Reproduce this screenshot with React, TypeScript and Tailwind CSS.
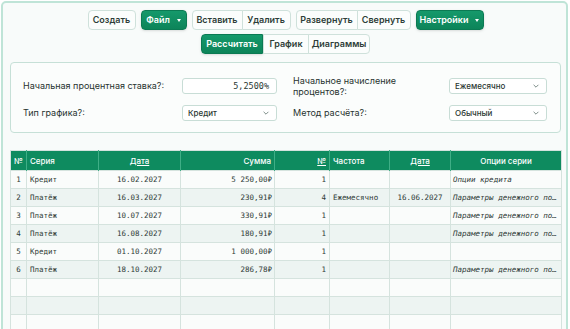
import React from "react";

const mono = "font-['DejaVu_Sans_Mono','Liberation_Mono',monospace]";

type Row = {
	n: number;
	series: string;
	date: string;
	sum: string;
	count: number;
	freq?: string;
	endDate?: string;
	options?: string;
};

const rows: Row[] = [
	{ n: 1, series: "Кредит", date: "16.02.2027", sum: "5 250,00₽", count: 1, options: "Опции кредита" },
	{ n: 2, series: "Платёж", date: "16.03.2027", sum: "230,91₽", count: 4, freq: "Ежемесячно", endDate: "16.06.2027", options: "Параметры денежного по…" },
	{ n: 3, series: "Платёж", date: "10.07.2027", sum: "330,91₽", count: 1, options: "Параметры денежного по…" },
	{ n: 4, series: "Платёж", date: "16.08.2027", sum: "180,91₽", count: 1, options: "Параметры денежного по…" },
	{ n: 5, series: "Кредит", date: "01.10.2027", sum: "1 000,00₽", count: 1 },
	{ n: 6, series: "Платёж", date: "18.10.2027", sum: "286,78₽", count: 1, options: "Параметры денежного по…" },
];

function Btn({ children, green, className = "" }: { children: React.ReactNode; green?: boolean; className?: string }) {
	return (
		<button
			className={
				"flex h-[20px] items-center justify-center px-[7px] text-[9px] font-semibold " +
				(green
					? "rounded-[4px] border border-[#0b7a53] bg-gradient-to-b from-[#15996b] to-[#0c8459] text-white shadow-sm "
					: "border border-[#cfe1db] bg-[#fbfdfc] text-[#2e3d38] ") +
				className
			}
		>
			{children}
		</button>
	);
}

function Caret() {
	return <span className="ml-[7px] inline-block h-0 w-0 border-x-[2.5px] border-t-[3px] border-x-transparent border-t-white" />;
}

function Chevron() {
	return (
		<svg width="8" height="8" viewBox="0 0 10 10" className="text-[#6b7d77]">
			<path d="M2 3.5 L5 6.5 L8 3.5" fill="none" stroke="currentColor" strokeWidth="1.1" />
		</svg>
	);
}

function Select({ value }: { value: string }) {
	return (
		<div className="flex h-[16px] items-center justify-between rounded-[3px] border border-[#c8ddd6] bg-white pl-[5px] pr-[6px] text-[8px] font-medium text-[#2b3833]">
			<span>{value}</span>
			<Chevron />
		</div>
	);
}

export default function App() {
	return (
		<div className="h-[329px] w-[570px] overflow-hidden bg-white pl-[1px] pt-[1px] font-['Inter','Liberation_Sans',sans-serif]">
			<div className="h-[340px] w-[567px] rounded-[5px] border-2 border-[#bfe4d7] bg-[#f8fbfa] pl-[7px] pr-[5px] pt-[7px]">
				{/* toolbar */}
				<div className="flex justify-center gap-[5px]">
					<Btn className="w-[48px] rounded-[4px]">Создать</Btn>
					<Btn green className="w-[46px]">
						Файл <Caret />
					</Btn>
					<div className="flex">
						<Btn className="w-[51px] rounded-l-[4px]">Вставить</Btn>
						<Btn className="-ml-px w-[49px] rounded-r-[4px]">Удалить</Btn>
					</div>
					<div className="flex">
						<Btn className="w-[62px] rounded-l-[4px]">Развернуть</Btn>
						<Btn className="-ml-px w-[54px] rounded-r-[4px]">Свернуть</Btn>
					</div>
					<Btn green className="w-[68px]">
						Настройки <Caret />
					</Btn>
				</div>
				<div className="mt-[4px] flex justify-center">
					<Btn green className="w-[62px] !rounded-r-none !rounded-l-[4px]">Рассчитать</Btn>
					<Btn className="w-[46px]">График</Btn>
					<Btn className="-ml-px w-[62px] rounded-r-[4px]">Диаграммы</Btn>
				</div>

				{/* settings panel */}
				<div className="mt-[8px] w-[551px] rounded-[4px] border border-[#c6e0d7] bg-[#fbfdfc] pb-[11px] pl-[12px] pt-[12px] text-[9px] text-[#27332f]">
					<div className="grid grid-cols-[159px_95px_172px_98px] items-center gap-y-[8px]">
						<span>Начальная процентная ставка?:</span>
						<div className={"flex h-[16px] items-center justify-end rounded-[3px] border border-[#c8ddd6] bg-white pr-[7px] text-[8.5px] text-[#2b3833] " + mono}>
							5,2500%
						</div>
						<span className="pl-[16px] leading-[11px]">
							Начальное начисление
							<br />
							процентов?:
						</span>
						<Select value="Ежемесячно" />
						<span>Тип графика?:</span>
						<Select value="Кредит" />
						<span className="pl-[16px]">Метод расчёта?:</span>
						<Select value="Обычный" />
					</div>
				</div>

				{/* table */}
				<table className="mt-[17px] w-[551px] table-fixed border-collapse border border-[#d3e2dd]">
					<colgroup>
						<col className="w-[16px]" />
						<col className="w-[72px]" />
						<col className="w-[82px]" />
						<col className="w-[94px]" />
						<col className="w-[55px]" />
						<col className="w-[60px]" />
						<col className="w-[61px]" />
						<col className="w-[111px]" />
					</colgroup>
					<thead>
						<tr className="h-[20px] bg-[#0e8b5f] text-[8px] font-medium text-white">
							<th className="border-r border-[#3fae86] pl-[3px] text-left font-medium">№</th>
							<th className="border-r border-[#3fae86] pl-[3px] text-left font-medium">Серия</th>
							<th className="border-r border-[#3fae86] text-center font-medium underline">Дата</th>
							<th className="border-r border-[#3fae86] pr-[3px] text-right font-medium">Сумма</th>
							<th className="border-r border-[#3fae86] pr-[3px] text-right font-medium underline">№</th>
							<th className="border-r border-[#3fae86] pl-[3px] text-left font-medium">Частота</th>
							<th className="border-r border-[#3fae86] text-center font-medium underline">Дата</th>
							<th className="text-center font-medium">Опции серии</th>
						</tr>
					</thead>
					<tbody className={"text-[7.5px] text-[#2f3b37] " + mono}>
						{rows.map((r, i) => (
							<tr key={r.n} className={"h-[18px] " + (i % 2 === 0 ? "bg-[#fafcfb]" : "bg-[#edf4f2]")}>
								<td className="border border-[#d5e3de] text-center">{r.n}</td>
								<td className="border border-[#d5e3de] pl-[3px]">{r.series}</td>
								<td className="border border-[#d5e3de] text-center">{r.date}</td>
								<td className="border border-[#d5e3de] pr-[2px] text-right">{r.sum}</td>
								<td className="border border-[#d5e3de] pr-[3px] text-right">{r.count}</td>
								<td className="border border-[#d5e3de] pl-[3px]">{r.freq ?? ""}</td>
								<td className="border border-[#d5e3de] text-center">{r.endDate ?? ""}</td>
								<td className="whitespace-nowrap border border-[#d5e3de] pl-[2px] italic">{r.options ?? ""}</td>
							</tr>
						))}
						{[0, 1, 2].map((k) => (
							<tr key={"e" + k} className={"h-[18px] " + (k % 2 === 0 ? "bg-[#fafcfb]" : "bg-[#edf4f2]")}>
								{Array.from({ length: 8 }).map((_, c) => (
									<td key={c} className="border border-[#d5e3de]" />
								))}
							</tr>
						))}
					</tbody>
				</table>
			</div>
		</div>
	);
}
